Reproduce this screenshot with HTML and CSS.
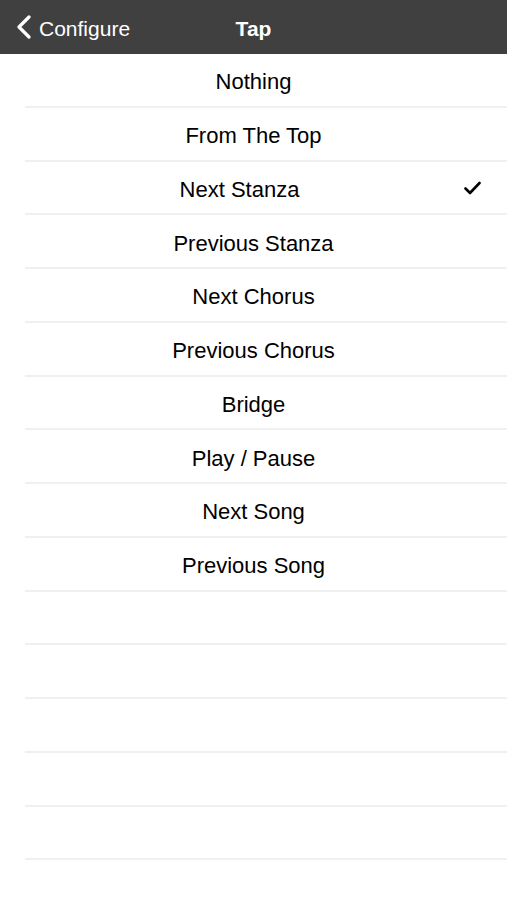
FILE: index.html
```html
<!DOCTYPE html>
<html>
<head>
   <meta charset="utf-8" />
   <title>Tap</title>
   <link rel="stylesheet" href="styles.css">
</head>
<body>
   <header class="navbar">
      <a class="back" href="#">
         <svg class="chevron" width="16" height="24" viewBox="0 0 16 24">
            <path d="M13 2 L3 12 L13 22" fill="none" stroke="#fff" stroke-width="3.2" stroke-linecap="round" stroke-linejoin="round" />
         </svg>
         <span>Configure</span>
      </a>
      <h1 class="title">Tap</h1>
   </header>
   <ul class="list">
      <li class="row"><span class="label">Nothing</span></li>
      <li class="row"><span class="label">From The Top</span></li>
      <li class="row checked">
         <span class="label">Next Stanza</span>
         <svg class="check" width="17" height="14" viewBox="0 0 17 14">
            <path d="M1.5 7.5 L6 12 L15.5 2" fill="none" stroke="#000" stroke-width="2.6" stroke-linecap="round" stroke-linejoin="round" />
         </svg>
      </li>
      <li class="row"><span class="label">Previous Stanza</span></li>
      <li class="row"><span class="label">Next Chorus</span></li>
      <li class="row"><span class="label">Previous Chorus</span></li>
      <li class="row"><span class="label">Bridge</span></li>
      <li class="row"><span class="label">Play / Pause</span></li>
      <li class="row"><span class="label">Next Song</span></li>
      <li class="row"><span class="label">Previous Song</span></li>
      <li class="row"></li>
      <li class="row"></li>
      <li class="row"></li>
      <li class="row"></li>
      <li class="row"></li>
      <li class="row"></li>
   </ul>
</body>
</html>
```

FILE: styles.css
```css
body { margin: 0; font-family: "Liberation Sans", Arial, sans-serif; background: #fff; color: #000; }

.navbar { position: relative; height: 54px; box-sizing: border-box; padding-top: 3px; background: #404040; color: #fff; display: flex; align-items: center; justify-content: center; }

.back { position: absolute; left: 16px; top: 0; height: 54px; display: flex; align-items: center; gap: 7px; color: #fff; text-decoration: none; font-size: 21px; }

.back span { padding-top: 3px; }

.title { margin: 0; font-size: 21px; font-weight: bold; }

.list { list-style: none; margin: 0; padding: 0 0 0 25px; }

.row { height: 53.75px; box-sizing: border-box; border-bottom: 2px solid #f0f0f0; display: flex; align-items: center; justify-content: center; padding-top: 5px; font-size: 22px; }

.label { flex: 1; text-align: center; margin-left: -25px; }

.check { flex: none; margin: -4px 26px 0 -15px; }
```
